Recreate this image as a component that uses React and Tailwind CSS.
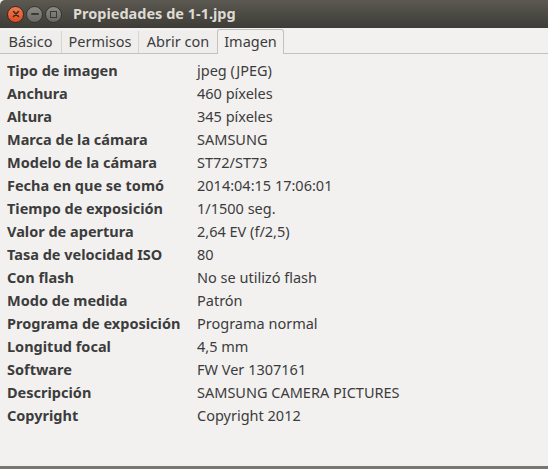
import React from "react";

const rows = [
  ["Tipo de imagen", "jpeg (JPEG)"],
  ["Anchura", "460 píxeles"],
  ["Altura", "345 píxeles"],
  ["Marca de la cámara", "SAMSUNG"],
  ["Modelo de la cámara", "ST72/ST73"],
  ["Fecha en que se tomó", "2014:04:15 17:06:01"],
  ["Tiempo de exposición", "1/1500 seg."],
  ["Valor de apertura", "2,64 EV (f/2,5)"],
  ["Tasa de velocidad ISO", "80"],
  ["Con flash", "No se utilizó flash"],
  ["Modo de medida", "Patrón"],
  ["Programa de exposición", "Programa normal"],
  ["Longitud focal", "4,5 mm"],
  ["Software", "FW Ver 1307161"],
  ["Descripción", "SAMSUNG CAMERA PICTURES"],
  ["Copyright", "Copyright 2012"],
];

const tabs = [
  { label: "Básico", w: "w-[61px]" },
  { label: "Permisos", w: "w-[77px]" },
  { label: "Abrir con", w: "w-[79px]" },
];

export default function App() {
  return (
    <div
      className="w-[548px] h-[469px] flex flex-col bg-[#f2f1f0] overflow-hidden text-[#3c3c3c]"
      style={{ fontFamily: '"Noto Sans", "Open Sans", sans-serif' }}
    >
      {/* Title bar */}
      <div className="h-[28px] shrink-0 flex items-center rounded-tl-[5px] bg-gradient-to-b from-[#5b5951] to-[#3d3c37]">
        <div className="flex items-center gap-[2px] pl-[7px]">
          <div className="w-[17px] h-[17px] rounded-full bg-gradient-to-b from-[#f37a4f] to-[#df4a1c] border border-[#3a2a22] flex items-center justify-center">
            <svg width="8" height="8" viewBox="0 0 8 8">
              <path d="M1.5 1.5 L6.5 6.5 M6.5 1.5 L1.5 6.5" stroke="#3b2a22" strokeWidth="1.6" strokeLinecap="round" />
            </svg>
          </div>
          <div className="w-[17px] h-[17px] rounded-full bg-gradient-to-b from-[#8c8a84] to-[#6a6863] border border-[#34332f] flex items-center justify-center">
            <div className="w-[8px] h-[2px] bg-[#3a3935] rounded-sm" />
          </div>
          <div className="w-[17px] h-[17px] rounded-full bg-gradient-to-b from-[#8c8a84] to-[#6a6863] border border-[#34332f] flex items-center justify-center">
            <div className="w-[7px] h-[7px] border-[1.5px] border-[#3a3935]" />
          </div>
        </div>
        <div className="ml-[11px] text-[14.5px] font-bold text-[#dfdbd2] leading-none pb-[1px]">
          Propiedades de 1-1.jpg
        </div>
      </div>

      {/* Tabs */}
      <div className="h-[26px] shrink-0 flex items-end">
        <div className="flex h-[23px] border-b border-[#c4c2bd] items-stretch">
          {tabs.map((t, i) => (
            <div
              key={t.label}
              className={`${t.w} flex items-center justify-center text-[14.5px] bg-[#efeeec] ${i > 0 ? "border-l border-[#d6d4d0]" : ""}`}
            >
              {t.label}
            </div>
          ))}
        </div>
        <div className="w-[67px] h-[25px] flex items-center justify-center text-[14.5px] bg-[#f2f1f0] border border-b-0 border-[#c4c2bd] rounded-t-[3px]">
          Imagen
        </div>
        <div className="flex-1 h-[23px] border-b border-[#c4c2bd]" />
      </div>

      {/* Content */}
      <div className="pt-[5px] pl-[7px] flex flex-col">
        {rows.map(([k, v]) => (
          <div key={k} className="flex h-[23px] items-center text-[14.5px]">
            <div className="w-[190px] font-bold">{k}</div>
            <div>{v}</div>
          </div>
        ))}
      </div>

      <div className="flex-1" />
      <div className="h-[3px] shrink-0 bg-[#777672]" />
    </div>
  );
}
